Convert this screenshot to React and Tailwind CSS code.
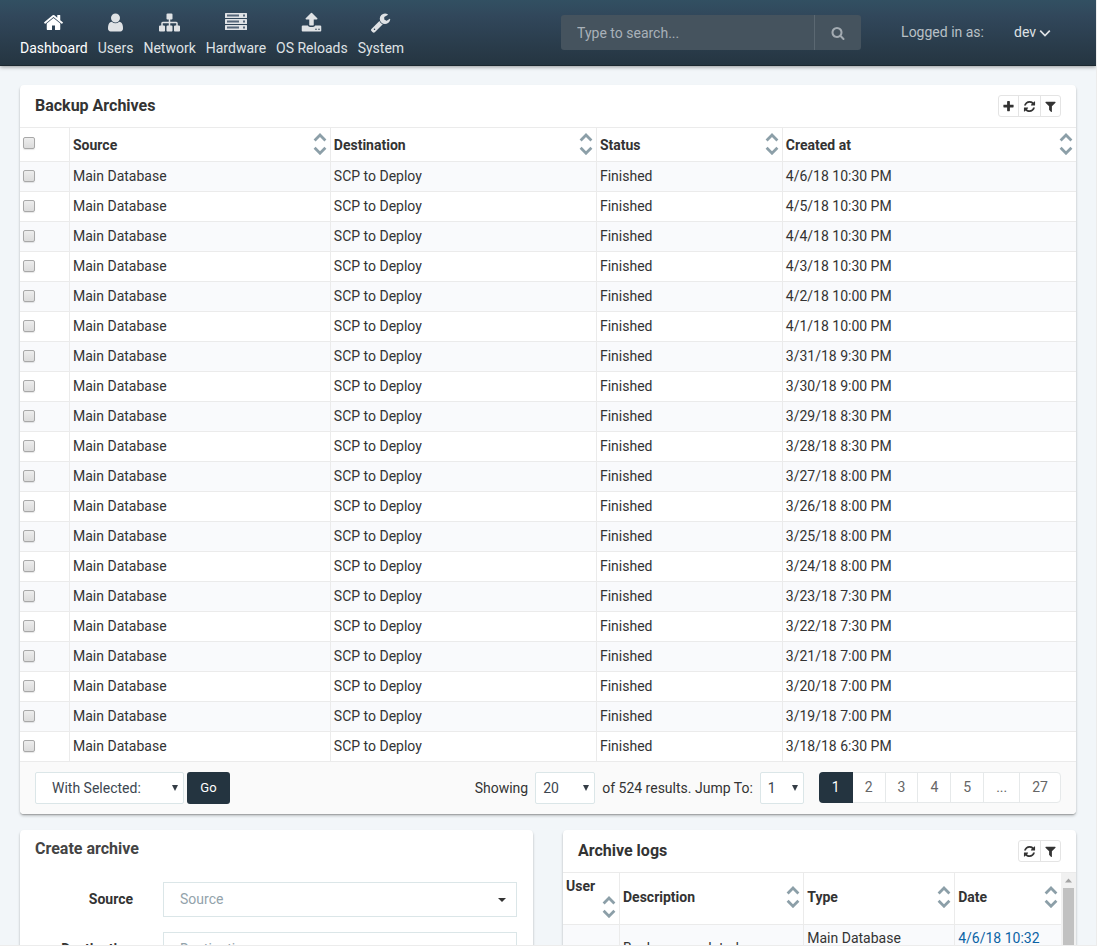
import React from "react";

const PATHS = {
  home: "M1472 992v480q0 26-19 45t-45 19h-384v-384h-256v384h-384q-26 0-45-19t-19-45v-480q0-1 .5-3t.5-3l575-474 575 474q1 2 1 6zm223-69l-62 74q-8 9-21 11h-3q-13 0-21-7l-692-577-692 577q-12 8-24 7-13-2-21-11l-62-74q-8-10-7-23.5t11-21.5l719-599q32-26 76-26t76 26l244 204v-195q0-14 9-23t23-9h192q14 0 23 9t9 23v408l219 182q10 8 11 21.5t-7 23.5z",
  user: "M1536 1399q0 109-62.5 187t-150.5 78h-854q-88 0-150.5-78t-62.5-187q0-85 8.5-160.5t31.5-152 58.5-131 94-89 134.5-34.5q131 128 313 128t313-128q76 0 134.5 34.5t94 89 58.5 131 31.5 152 8.5 160.5zm-256-887q0 159-112.5 271.5t-271.5 112.5-271.5-112.5-112.5-271.5 112.5-271.5 271.5-112.5 271.5 112.5 112.5 271.5z",
  sitemap: "M1792 1248v320q0 40-28 68t-68 28h-320q-40 0-68-28t-28-68v-320q0-40 28-68t68-28h96v-192h-512v192h96q40 0 68 28t28 68v320q0 40-28 68t-68 28h-320q-40 0-68-28t-28-68v-320q0-40 28-68t68-28h96v-192h-512v192h96q40 0 68 28t28 68v320q0 40-28 68t-68 28h-320q-40 0-68-28t-28-68v-320q0-40 28-68t68-28h96v-192q0-52 38-90t90-38h512v-192h-96q-40 0-68-28t-28-68v-320q0-40 28-68t68-28h320q40 0 68 28t28 68v320q0 40-28 68t-68 28h-96v192h512q52 0 90 38t38 90v192h96q40 0 68 28t28 68z",
  upload: "M1344 1472q0-26-19-45t-45-19-45 19-19 45 19 45 45 19 45-19 19-45zm256 0q0-26-19-45t-45-19-45 19-19 45 19 45 45 19 45-19 19-45zm128-224v320q0 40-28 68t-68 28h-1472q-40 0-68-28t-28-68v-320q0-40 28-68t68-28h427q21 56 70.5 92t110.5 36h256q61 0 110.5-36t70.5-92h427q40 0 68 28t28 68zm-325-648q-17 40-59 40h-256v448q0 26-19 45t-45 19h-256q-26 0-45-19t-19-45v-448h-256q-42 0-59-40-17-39 14-69l448-448q18-19 45-19t45 19l448 448q31 30 14 69z",
  wrench: "M448 1472q0-26-19-45t-45-19-45 19-19 45 19 45 45 19 45-19 19-45zm644-420l-682 682q-37 37-90 37-52 0-91-37l-106-108q-38-36-38-90 0-53 38-91l681-681q39 98 114.5 173.5t173.5 114.5zm634-435q0 39-23 106-47 134-164.5 217.5t-258.5 83.5q-185 0-316.5-131.5t-131.5-316.5 131.5-316.5 316.5-131.5q58 0 121.5 16.5t107.5 46.5q16 11 16 28t-16 28l-293 169v224l193 107q5-3 79-48.5t135.5-81 70.5-35.5q15 0 23.5 10t8.5 25z",
  search: "M1216 832q0-185-131.5-316.5t-316.5-131.5-316.5 131.5-131.5 316.5 131.5 316.5 316.5 131.5 316.5-131.5 131.5-316.5zm512 832q0 52-38 90t-90 38q-54 0-90-38l-343-342q-179 124-399 124-143 0-273.5-55.5t-225-150-150-225-55.5-273.5 55.5-273.5 150-225 225-150 273.5-55.5 273.5 55.5 225 150 150 225 55.5 273.5q0 220-124 399l343 343q37 37 37 90z",
  plus: "M1600 736v192q0 40-28 68t-68 28h-416v416q0 40-28 68t-68 28h-192q-40 0-68-28t-28-68v-416h-416q-40 0-68-28t-28-68v-192q0-40 28-68t68-28h416v-416q0-40 28-68t68-28h192q40 0 68 28t28 68v416h416q40 0 68 28t28 68z",
  refresh: "M1639 1056q0 5-1 7-64 268-268 434.5t-478 166.5q-146 0-282.5-55t-243.5-157l-129 129q-19 19-45 19t-45-19-19-45v-448q0-26 19-45t45-19h448q26 0 45 19t19 45-19 45l-137 137q71 66 161 102t187 36q134 0 250-65t186-179q11-17 53-117 8-23 30-23h192q13 0 22.5 9.5t9.5 22.5zm25-800v448q0 26-19 45t-45 19h-448q-26 0-45-19t-19-45 19-45l138-138q-148-137-349-137-134 0-250 65t-186 179q-11 17-53 117-8 23-30 23h-199q-13 0-22.5-9.5t-9.5-22.5v-7q65-268 270-434.5t480-166.5q146 0 284 55.5t245 156.5l130-129q19-19 45-19t45 19 19 45z",
  filter: "M1595 295q17 41-14 70l-493 493v742q0 42-39 59-13 5-25 5-27 0-45-19l-256-256q-19-19-19-45v-486l-493-493q-31-29-14-70 17-39 59-39h1280q42 0 59 39z",
};

function Icon({ name, className }) {
  return (
    <svg viewBox="0 0 1792 1792" fill="currentColor" aria-hidden="true" className={className}>
      <path d={PATHS[name]} />
    </svg>
  );
}

function ServerIcon() {
  return (
    <svg viewBox="0 0 22 21" aria-hidden="true" className="h-[21px] w-[22px]">
      {[1, 7, 13].map((y) => (
        <g key={y}>
          <rect x="0" y={y} width="22" height="5" rx="0.5" fill="currentColor" />
          <rect x="2" y={y + 1.5} width="12" height="2" fill="#56677a" />
          <rect x="18" y={y + 1.5} width="2" height="2" fill="#56677a" />
        </g>
      ))}
    </svg>
  );
}

const NAV = [
  { label: "Dashboard", icon: "home", active: true },
  { label: "Users", icon: "user" },
  { label: "Network", icon: "sitemap" },
  { label: "Hardware", icon: "server" },
  { label: "OS Reloads", icon: "upload" },
  { label: "System", icon: "wrench" },
];

const DATES = [
  "4/6/18 10:30 PM", "4/5/18 10:30 PM", "4/4/18 10:30 PM", "4/3/18 10:30 PM",
  "4/2/18 10:00 PM", "4/1/18 10:00 PM", "3/31/18 9:30 PM", "3/30/18 9:00 PM",
  "3/29/18 8:30 PM", "3/28/18 8:30 PM", "3/27/18 8:00 PM", "3/26/18 8:00 PM",
  "3/25/18 8:00 PM", "3/24/18 8:00 PM", "3/23/18 7:30 PM", "3/22/18 7:30 PM",
  "3/21/18 7:00 PM", "3/20/18 7:00 PM", "3/19/18 7:00 PM", "3/18/18 6:30 PM",
];

function Header() {
  return (
    <header className="flex h-[66px] shrink-0 items-start border-b border-[#1c2830] bg-linear-to-b from-[#325062] via-[#31475b] via-25% to-[#253541] pr-[45px] pl-5 text-[#dfe2e5] shadow-[0_1px_4px_rgba(0,0,0,0.4)]">
      <nav className="flex gap-[10px] pt-3">
        {NAV.map((item) => (
          <a
            key={item.label}
            href="#"
            className={item.active ? "flex flex-col items-center gap-[5px] text-white" : "flex flex-col items-center gap-[5px]"}
          >
            {item.icon === "server" ? <ServerIcon /> : <Icon name={item.icon} className="size-[21px]" />}
            <span className="leading-5">{item.label}</span>
          </a>
        ))}
      </nav>
      <form className="mt-[15px] ml-auto flex h-[35px] w-[300px] overflow-hidden rounded-[3px] bg-[#45535e]" onSubmit={(e) => e.preventDefault()}>
        <input
          type="text"
          aria-label="Search"
          placeholder="Type to search..."
          className="min-w-0 flex-1 border-r border-[#5b6872] px-4 outline-none placeholder:text-[#a9b1b9]"
        />
        <button type="submit" aria-label="Submit search" className="flex w-[46px] items-center justify-center text-[#a3abb2]">
          <Icon name="search" className="size-[14px]" />
        </button>
      </form>
      <span className="mt-[22px] ml-10 leading-5 text-[#b9c0c6]">Logged in as:</span>
      <button type="button" className="mt-[22px] ml-[30px] flex items-center gap-[3px] leading-5">
        dev
        <svg viewBox="0 0 12 12" aria-hidden="true" className="mt-px size-3" fill="none" stroke="currentColor" strokeWidth="1.7">
          <path d="M1.2 3.7 6 8.5l4.8-4.8" />
        </svg>
      </button>
    </header>
  );
}

function SortIcon() {
  return (
    <svg viewBox="0 0 14 22" aria-hidden="true" className="h-[22px] w-[14px] shrink-0" fill="none" stroke="#8c9fa8" strokeWidth="2.8">
      <path d="M1.6 7.4 7 2l5.4 5.4" />
      <path d="M1.6 14.8 7 20.2l5.4-5.4" />
    </svg>
  );
}

function Check({ label }) {
  return (
    <input
      type="checkbox"
      aria-label={label}
      className="block size-3 appearance-none rounded-[2px] border border-[#a8a8a8] bg-linear-to-b from-[#ededed] to-[#dcdcdc] shadow-[0_1px_1px_rgba(0,0,0,0.1)] checked:from-[#7f97a5] checked:to-[#6b8392]"
    />
  );
}

function SortHead({ children, last }) {
  return (
    <th scope="col" className={last ? "px-[3px]" : "border-r border-[#ebebeb] px-[3px]"}>
      <div className="flex items-center justify-between">
        {children}
        <button type="button" aria-label={`Sort by ${children}`}>
          <SortIcon />
        </button>
      </div>
    </th>
  );
}

const TOOLS = {
  plus: { label: "Add", width: "w-5" },
  refresh: { label: "Refresh", width: "w-[22px]" },
  filter: { label: "Filter", width: "w-[19px]" },
};

function ToolButtons({ names }) {
  return (
    <div className="flex h-[22px] divide-x divide-[#e4e4e4] rounded-[3px] border border-[#e4e4e4]">
      {names.map((n) => (
        <button key={n} type="button" aria-label={TOOLS[n].label} className={`flex items-center justify-center ${TOOLS[n].width}`}>
          <Icon name={n} className="size-[13px] shrink-0" />
        </button>
      ))}
    </div>
  );
}

function Select({ label, options, width, pad }) {
  return (
    <span className={`relative inline-block h-8 ${width}`}>
      <select aria-label={label} className={`size-full appearance-none rounded-[2px] border border-[#dbe6e8] bg-white text-[#3c4650] ${pad}`}>
        {options.map((o) => (
          <option key={o}>{o}</option>
        ))}
      </select>
      <svg viewBox="0 0 6 6" aria-hidden="true" className="pointer-events-none absolute top-[13px] right-[6px] size-[6px]">
        <path d="M0 0h6L3 6z" fill="#353d45" />
      </svg>
    </span>
  );
}

const CARD = "rounded-[4px] bg-white shadow-[0_1px_1px_rgba(0,0,0,0.2),0_2px_3px_rgba(0,0,0,0.2)]";

function BackupArchives() {
  return (
    <section className={CARD}>
      <div className="flex h-[42px] items-center justify-between px-[15px]">
        <h2 className="text-base font-bold">Backup Archives</h2>
        <ToolButtons names={["plus", "refresh", "filter"]} />
      </div>
      <table className="w-full table-fixed border-separate border-spacing-0 text-left">
        <colgroup>
          <col className="w-[50px]" />
          <col className="w-[24.7%]" />
          <col className="w-[25.2%]" />
          <col className="w-[17.6%]" />
          <col />
        </colgroup>
        <thead>
          <tr className="h-[35px] [&_button]:mb-[2px] [&>th]:border-y [&>th]:border-y-[#ebebeb]">
            <th scope="col" className="border-r border-[#ebebeb] px-[3px] pb-[3px]">
              <Check label="Select all" />
            </th>
            <SortHead>Source</SortHead>
            <SortHead>Destination</SortHead>
            <SortHead>Status</SortHead>
            <SortHead last>Created at</SortHead>
          </tr>
        </thead>
        <tbody>
          {DATES.map((d) => (
            <tr key={d} className="h-[30px] odd:bg-[#f9fafc] [&>td]:border-b [&>td]:border-[#ebebeb] [&>td]:px-[3px] [&>td]:pb-[2px] [&>td:not(:last-child)]:border-r">
              <td>
                <Check label={`Select ${d}`} />
              </td>
              <td>Main Database</td>
              <td>SCP to Deploy</td>
              <td>Finished</td>
              <td>{d}</td>
            </tr>
          ))}
        </tbody>
      </table>
      <div className="flex h-[52px] items-center rounded-b-[4px] bg-[#fafafa] px-[15px]">
        <Select label="With selected" options={["With Selected:"]} width="w-[149px]" pad="pl-4" />
        <button type="button" className="ml-[3px] h-8 w-[43px] rounded-[3px] bg-[#243440] text-[13px] text-white">
          Go
        </button>
        <span className="ml-auto">Showing</span>
        <span className="ml-[7px]">
          <Select label="Results per page" options={["20"]} width="w-[60px]" pad="pl-[7px]" />
        </span>
        <span className="ml-[7px]">of 524 results. Jump To:</span>
        <span className="ml-[7px]">
          <Select label="Jump to page" options={["1"]} width="w-[44px]" pad="pl-[7px]" />
        </span>
        <nav aria-label="Pages" className="mb-px ml-[15px] flex h-[31px] rounded-[4px] border border-[#e6e9ea] bg-white leading-[29px] text-[#666]">
          <a href="#" aria-current="page" className="-my-px -ml-px rounded-l-[4px] bg-[#243440] px-[13px] leading-[31px] text-white">1</a>
          {["2", "3", "4", "5", "...", "27"].map((p) => (
            <a key={p} href="#" className="border-r border-[#e6e9ea] px-3 last:border-r-0">
              {p}
            </a>
          ))}
        </nav>
      </div>
    </section>
  );
}

function Field({ label }) {
  const id = label.toLowerCase();
  return (
    <div className="grid grid-cols-[98px_1fr] items-center gap-[30px]">
      <label htmlFor={id} className="pb-[2px] text-right font-bold">{label}</label>
      <span className="relative block h-[35px]">
        <select id={id} className="size-full appearance-none border border-[#dbe6e8] bg-white pb-[2px] pl-4 text-[#93a3ab]">
          <option>{label}</option>
        </select>
        <svg viewBox="0 0 8 4" aria-hidden="true" className="pointer-events-none absolute top-4 right-[11px] h-1 w-2">
          <path d="M0 0h8L4 4z" fill="#333" />
        </svg>
      </span>
    </div>
  );
}

function CreateArchive() {
  return (
    <section className={CARD}>
      <h2 className="pt-[7px] pl-[15px] text-base leading-6 font-bold text-[#444]">Create archive</h2>
      <form className="flex flex-col gap-[15px] pt-[21px] pr-4 pb-4 pl-[15px]">
        <Field label="Source" />
        <Field label="Destination" />
      </form>
    </section>
  );
}

function ArchiveLogs() {
  return (
    <section className={CARD}>
      <div className="flex h-[42px] items-center justify-between px-[15px]">
        <h2 className="text-base font-bold">Archive logs</h2>
        <ToolButtons names={["refresh", "filter"]} />
      </div>
      <div className="flex border-t border-[#ebebeb]">
        <table className="min-w-0 flex-1 table-fixed border-separate border-spacing-0 text-left">
          <colgroup>
            <col className="w-[57px]" />
            <col className="w-[37%]" />
            <col className="w-[30.3%]" />
            <col />
          </colgroup>
          <thead>
            <tr className="h-[52px] [&>th]:border-b [&>th]:border-b-[#ebebeb] [&>th]:pb-[4px]">
              <th scope="col" className="border-r border-[#ebebeb] px-[3px]">
                <div className="flex flex-col leading-5">
                  User
                  <button type="button" aria-label="Sort by User" className="self-end">
                    <SortIcon />
                  </button>
                </div>
              </th>
              <SortHead>Description</SortHead>
              <SortHead>Type</SortHead>
              <SortHead last>Date</SortHead>
            </tr>
          </thead>
          <tbody>
            <tr className="bg-[#f9fafc] leading-5 [&>td]:border-b [&>td]:border-[#ebebeb] [&>td]:p-[3px] [&>td:not(:last-child)]:border-r">
              <td />
              <td>Backup completed</td>
              <td>
                Main Database
                <br />
                SCP to Deploy
              </td>
              <td>
                <a href="#" className="text-[#0b63a5]">4/6/18 10:32 PM</a>
              </td>
            </tr>
          </tbody>
        </table>
        <div aria-hidden="true" className="flex w-[15px] flex-col items-center bg-[#f1f1f1]">
          <svg viewBox="0 0 15 15" className="size-[15px]">
            <path d="M4 9.5h7L7.5 5.5z" fill="#a3a3a3" />
          </svg>
          <div className="w-[11px] flex-1 bg-[#c1c1c1]" />
        </div>
      </div>
    </section>
  );
}

export default function App() {
  return (
    <div className="flex h-screen flex-col overflow-hidden border-r border-b border-[#ececec] bg-[#f2f6f9] font-['Roboto',sans-serif] text-sm text-[#333]">
      <Header />
      <main className="flex flex-col gap-4 px-5 pt-[19px]">
        <BackupArchives />
        <div className="grid grid-cols-2 gap-[30px]">
          <CreateArchive />
          <ArchiveLogs />
        </div>
      </main>
    </div>
  );
}
